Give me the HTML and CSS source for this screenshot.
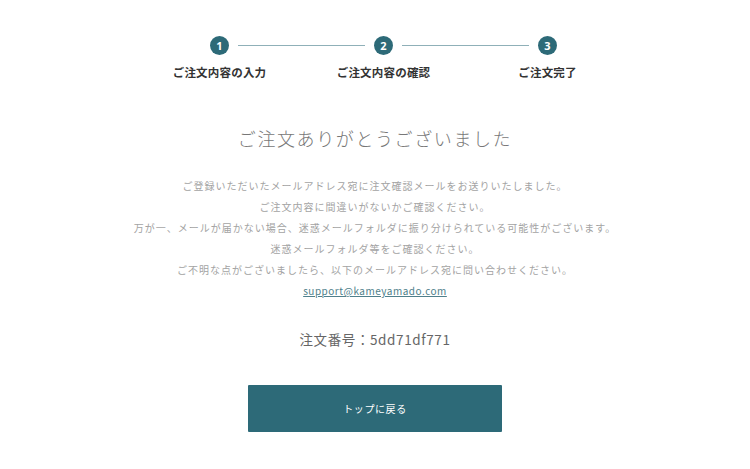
FILE: index.html
```html
<!DOCTYPE html>
<html lang="ja">
<head>
<meta charset="utf-8">
<title>ご注文完了</title>
<link rel="stylesheet" href="styles.css">
</head>
<body>
<main class="page">
  <section class="stepper">
    <div class="track">
      <span class="dot">1</span>
      <span class="bar"></span>
      <span class="dot">2</span>
      <span class="bar"></span>
      <span class="dot">3</span>
    </div>
    <div class="labels">
      <span class="label">ご注文内容の入力</span>
      <span class="label">ご注文内容の確認</span>
      <span class="label">ご注文完了</span>
    </div>
  </section>

  <h1 class="title">ご注文ありがとうございました</h1>

  <div class="message">
    <p>ご登録いただいたメールアドレス宛に注文確認メールをお送りいたしました。</p>
    <p>ご注文内容に間違いがないかご確認ください。</p>
    <p>万が一、メールが届かない場合、迷惑メールフォルダに振り分けられている可能性がございます。</p>
    <p>迷惑メールフォルダ等をご確認ください。</p>
    <p>ご不明な点がございましたら、以下のメールアドレス宛に問い合わせください。</p>
    <p><a class="mail" href="#">support@kameyamado.com</a></p>
  </div>

  <p class="order">注文番号：5dd71df771</p>

  <a class="button" href="#">トップに戻る</a>
</main>
</body>
</html>
```

FILE: styles.css
```css
* { box-sizing: border-box; }
html, body { margin: 0; padding: 0; background: #fff; }
body {
  font-family: "Noto Sans CJK JP", "Noto Sans", sans-serif;
  color: #666;
}
.page {
  width: 750px;
  display: flex;
  flex-direction: column;
  align-items: center;
}
.stepper {
  display: flex;
  flex-direction: column;
  align-items: center;
  margin-top: 36px;
  margin-left: 17px;
}
.track {
  display: flex;
  align-items: center;
  height: 19px;
}
.dot {
  width: 19px;
  height: 19px;
  border-radius: 50%;
  background: #2d6a78;
  color: #fff;
  font-family: "Open Sans", "Noto Sans", sans-serif;
  font-weight: 700;
  font-size: 11px;
  line-height: 19px;
  text-align: center;
}
.bar {
  width: 127px;
  height: 1px;
  margin: 0 9px;
  background: #8fb0b8;
}
.labels {
  display: grid;
  grid-template-columns: 164px 164px 164px;
  margin-top: 10px;
}
.label {
  text-align: center;
  font-size: 11.5px;
  font-weight: 700;
  color: #333;
  line-height: 14px;
  letter-spacing: 0.2px;
}
.title {
  margin: 46px 0 0 0;
  font-size: 18px;
  font-weight: 300;
  letter-spacing: 1.6px;
  color: #777;
  line-height: 26px;
}
.message {
  margin-top: 24px;
  text-align: center;
  font-size: 10px;
  letter-spacing: 1px;
  color: #a3a3a3;
  line-height: 21px;
}
.message p { margin: 0; }
.mail {
  color: #4f7f8b;
  text-decoration: underline;
  letter-spacing: 0.5px;
}
.order {
  margin: 28px 0 0;
  font-size: 13.5px;
  letter-spacing: 0.6px;
  color: #666;
  line-height: 20px;
}
.button {
  margin-top: 36px;
  width: 254px;
  height: 47px;
  display: flex;
  align-items: center;
  justify-content: center;
  background: #2d6a78;
  color: #fff;
  font-size: 10px;
  letter-spacing: 0.6px;
  text-decoration: none;
  border-radius: 1px;
}
```
